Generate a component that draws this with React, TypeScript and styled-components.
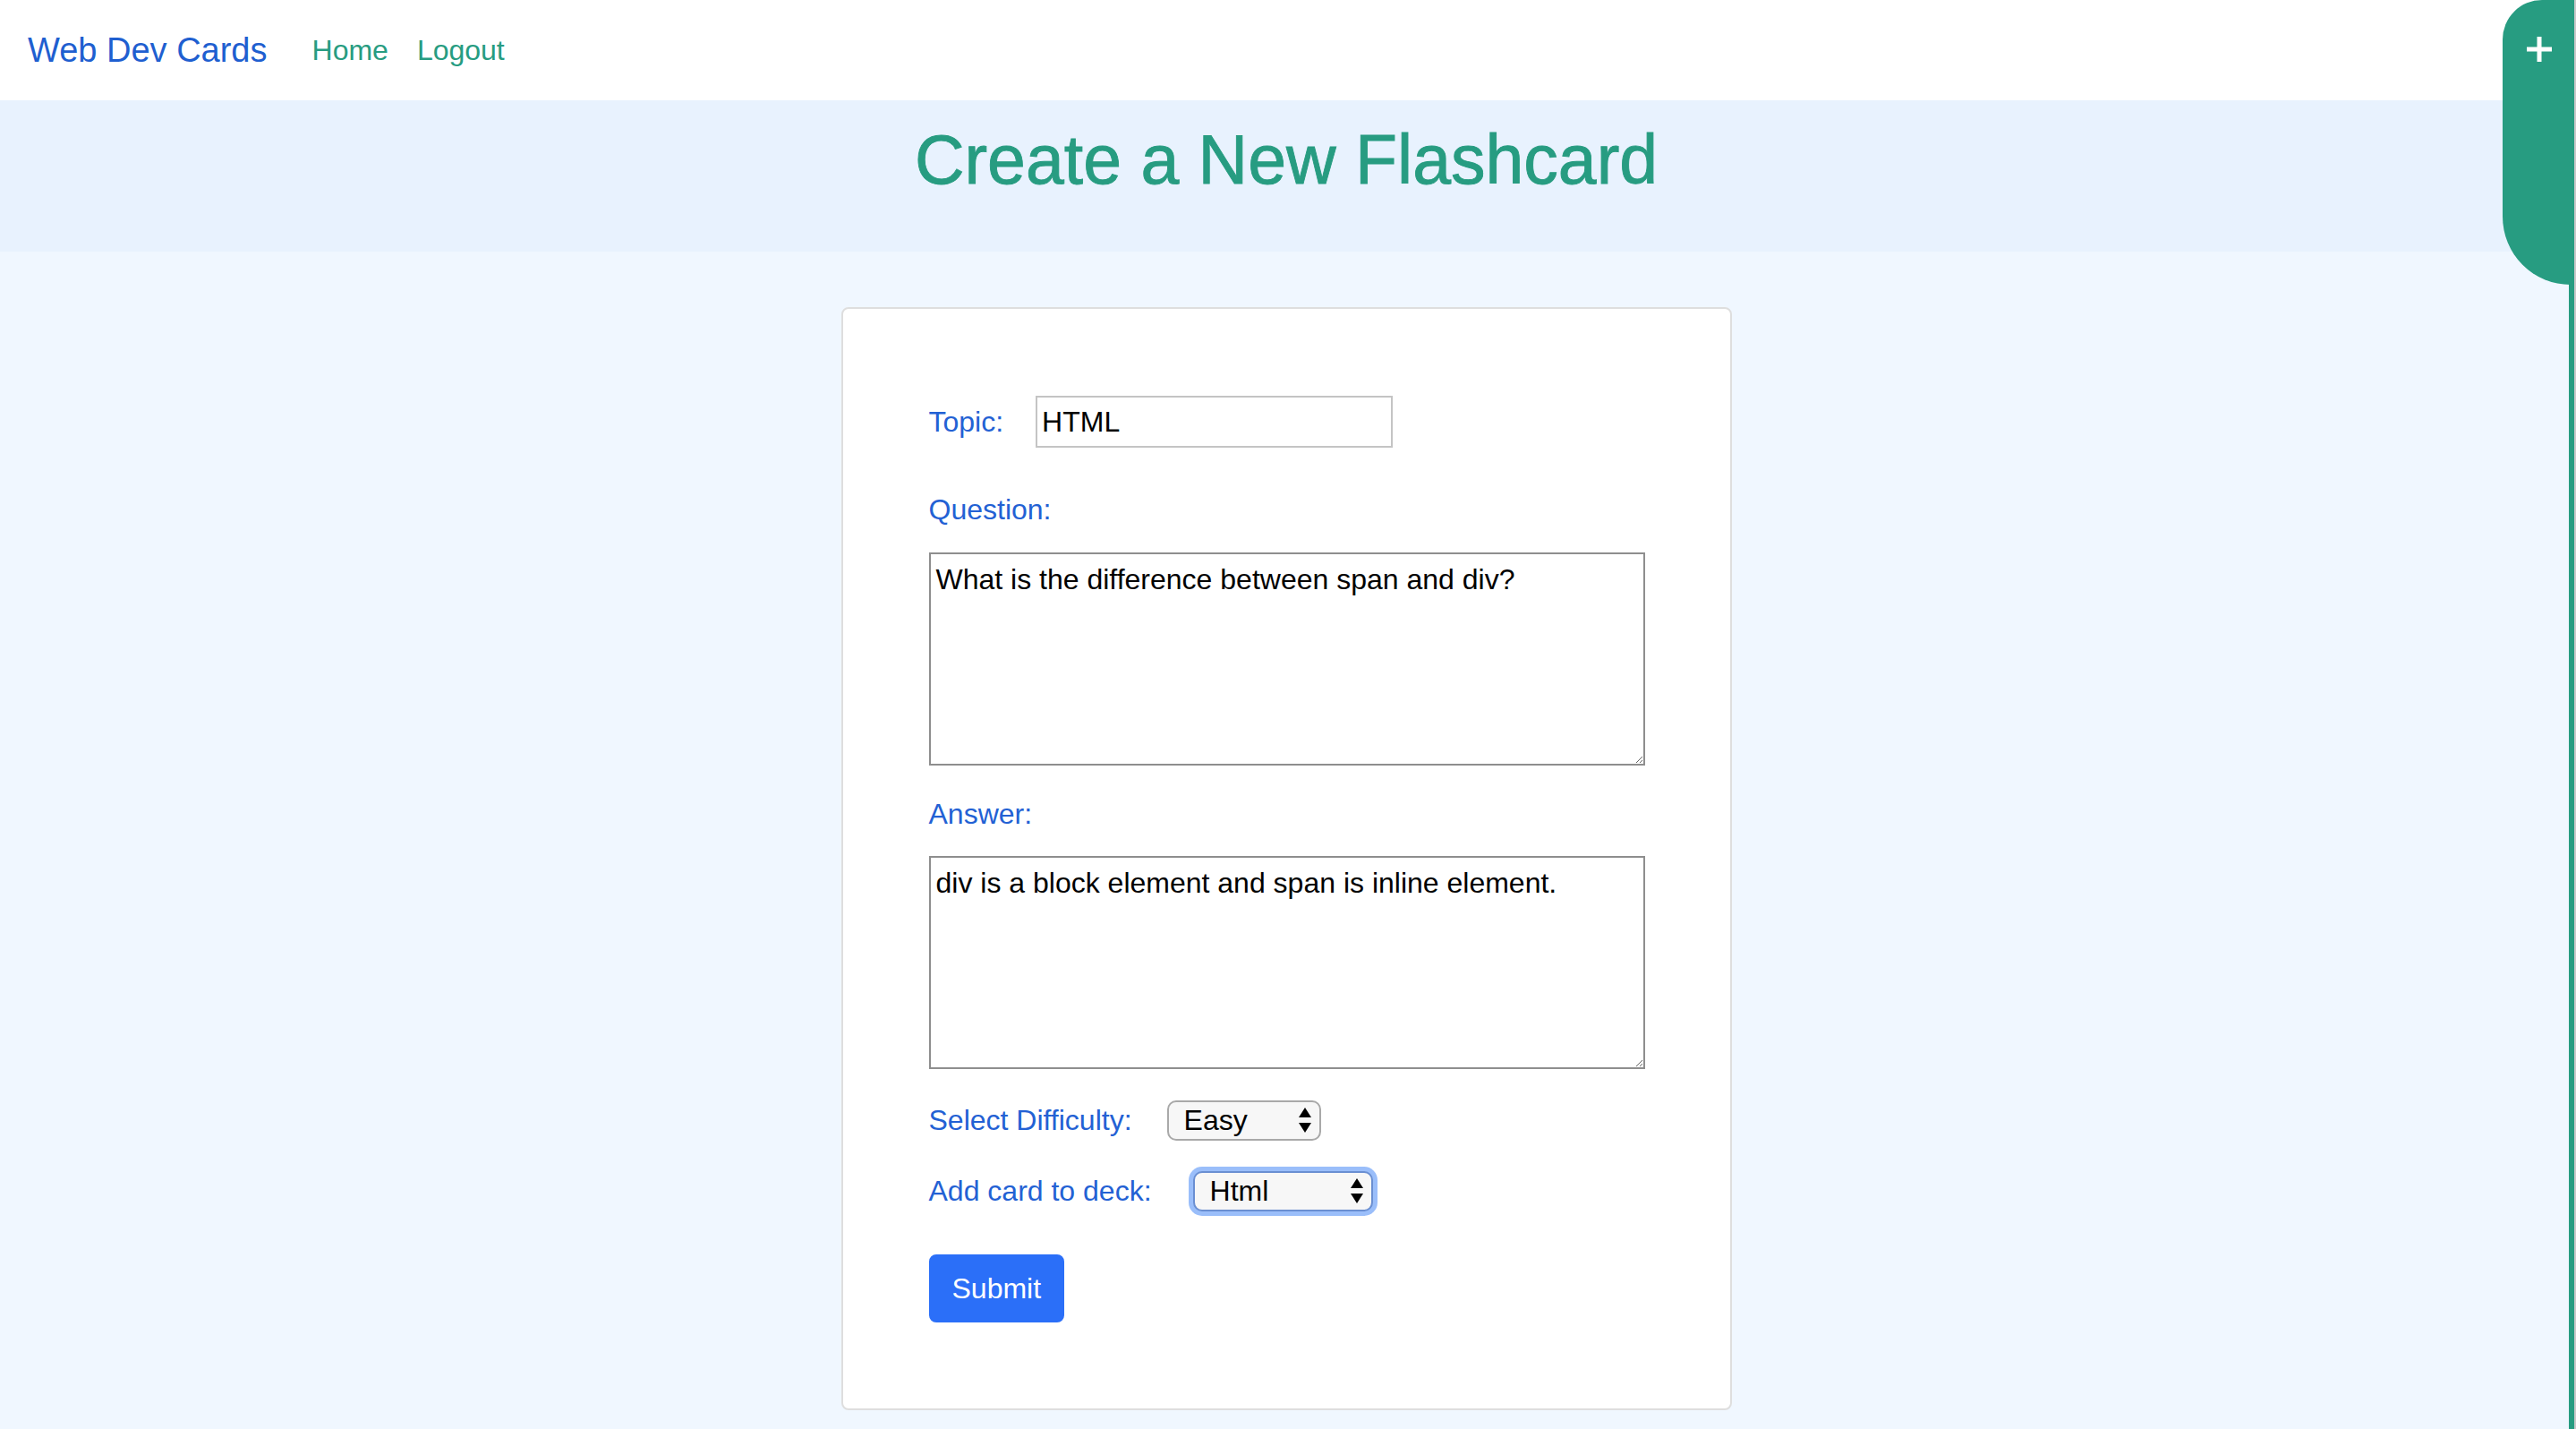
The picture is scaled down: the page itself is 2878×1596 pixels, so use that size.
import React from 'react';
import styled, { createGlobalStyle } from 'styled-components';

const GlobalStyle = createGlobalStyle`
  html, body {
    margin: 0;
    padding: 0;
    background: #f0f7ff;
    font-family: 'Liberation Sans', Arial, Helvetica, sans-serif;
    min-height: 100vh;
  }
  body {
    padding-right: 4px;
  }
  * {
    box-sizing: border-box;
  }
`;

const BLUE = '#2361d4';
const GREEN = '#279c81';

const Navbar = styled.nav`
  display: flex;
  align-items: center;
  height: 112px;
  margin-right: -4px;
  padding: 0 32px 0 31px;
  background: #ffffff;
`;

const Brand = styled.a`
  font-size: 38px;
  color: #1f5fd0;
  text-decoration: none;
  margin-right: 34px;
  line-height: 1.5;
`;

const NavLink = styled.a`
  font-size: 32px;
  color: ${GREEN};
  text-decoration: none;
  padding: 0 16px;
  line-height: 1.5;
`;

const Jumbo = styled.header`
  background: #e8f2fe;
  height: 169px;
  margin-right: -4px;
  padding: 18px 4px 0 0;
  text-align: center;
`;

const Title = styled.h1`
  margin: 0;
  font-size: 77px;
  font-weight: 400;
  line-height: 96px;
  color: ${GREEN};
  -webkit-text-stroke: 0.9px ${GREEN};
`;

const Card = styled.main`
  width: 995px;
  margin: 62px auto 24px;
  background: #ffffff;
  border: 2px solid #dedede;
  border-radius: 8px;
  padding: 97px 96px 96px;
`;

const Row = styled.div<{ $gap: number; $mb: number }>`
  display: flex;
  align-items: center;
  gap: ${({ $gap }) => $gap}px;
  margin-bottom: ${({ $mb }) => $mb}px;
`;

const Label = styled.label<{ $mb?: number }>`
  display: block;
  font-size: 32px;
  line-height: 48px;
  color: ${BLUE};
  margin-bottom: ${({ $mb = 0 }) => $mb}px;
`;

const TextInput = styled.input`
  width: 399px;
  height: 58px;
  border: 2px solid #c4c4c4;
  padding: 0 5px;
  font-family: inherit;
  font-size: 32px;
  color: #000;
  background: #fff;
  outline: none;
`;

const TextArea = styled.textarea<{ $mb: number }>`
  display: block;
  width: 800px;
  height: 238px;
  border: 2px solid #8e8e8e;
  padding: 4px 6px;
  font-family: inherit;
  font-size: 32px;
  line-height: 48px;
  color: #000;
  background: #fff;
  outline: none;
  margin: 0 0 ${({ $mb }) => $mb}px;
`;

const SelectWrap = styled.div`
  position: relative;
  display: inline-flex;
`;

const Select = styled.select<{ $w: number; $focused?: boolean }>`
  appearance: none;
  width: ${({ $w }) => $w}px;
  height: 45px;
  border: 2px solid ${({ $focused }) => ($focused ? '#6a8fd2' : '#a9a9a9')};
  border-radius: 10px;
  background: #f7f7f7;
  padding: 0 30px 0 17px;
  font-family: inherit;
  font-size: 32px;
  color: #000;
  outline: none;
  box-shadow: ${({ $focused }) =>
    $focused ? '0 0 0 5px rgba(120, 168, 248, 0.75)' : 'none'};
`;

const Arrows = styled.svg`
  position: absolute;
  right: 10px;
  top: 50%;
  transform: translateY(-50%);
  pointer-events: none;
`;

const SubmitButton = styled.button`
  display: inline-block;
  padding: 12px 24px;
  font-family: inherit;
  font-size: 32px;
  line-height: 48px;
  color: #ffffff;
  background: #2b6ff8;
  border: 2px solid #2b6ff8;
  border-radius: 8px;
  cursor: pointer;
`;

const SideStripe = styled.div`
  position: fixed;
  top: 0;
  right: 0;
  bottom: 0;
  width: 8px;
  background: ${GREEN};
  border-right: 2px solid #c9c9c9;
`;

const SideTab = styled.button`
  position: fixed;
  top: 0;
  right: 2px;
  width: 80px;
  height: 318px;
  border: none;
  background: ${GREEN};
  border-radius: 44px 0 0 76px;
  padding: 40px 0 0 26px;
  display: flex;
  align-items: flex-start;
  cursor: pointer;
`;

const SelectArrows = () => (
  <Arrows width="16" height="30" viewBox="0 0 16 30">
    <path d="M8 1 L15 12 L1 12 Z" fill="#000" />
    <path d="M1 18 L15 18 L8 29 Z" fill="#000" />
  </Arrows>
);

export default function App() {
  return (
    <>
      <GlobalStyle />
      <Navbar>
        <Brand href="#">Web Dev Cards</Brand>
        <NavLink href="#">Home</NavLink>
        <NavLink href="#">Logout</NavLink>
      </Navbar>

      <Jumbo>
        <Title>Create a New Flashcard</Title>
      </Jumbo>

      <Card>
        <form onSubmit={(e) => e.preventDefault()}>
          <Row $gap={36} $mb={45}>
            <Label htmlFor="topic">Topic:</Label>
            <TextInput id="topic" defaultValue="HTML" />
          </Row>

          <Label htmlFor="question" $mb={24}>
            Question:
          </Label>
          <TextArea
            id="question"
            $mb={30}
            defaultValue="What is the difference between span and div?"
          />

          <Label htmlFor="answer" $mb={23}>
            Answer:
          </Label>
          <TextArea
            id="answer"
            $mb={33}
            defaultValue="div is a block element and span is inline element."
          />

          <Row $gap={39} $mb={31}>
            <Label htmlFor="difficulty">Select Difficulty:</Label>
            <SelectWrap>
              <Select id="difficulty" $w={172} defaultValue="Easy">
                <option>Easy</option>
                <option>Medium</option>
                <option>Hard</option>
              </Select>
              <SelectArrows />
            </SelectWrap>
          </Row>

          <Row $gap={46} $mb={47}>
            <Label htmlFor="deck">Add card to deck:</Label>
            <SelectWrap>
              <Select id="deck" $w={201} $focused defaultValue="Html">
                <option>Html</option>
                <option>CSS</option>
                <option>JavaScript</option>
              </Select>
              <SelectArrows />
            </SelectWrap>
          </Row>

          <SubmitButton type="submit">Submit</SubmitButton>
        </form>
      </Card>

      <SideStripe />
      <SideTab aria-label="Add">
        <svg width="30" height="30" viewBox="0 0 30 30">
          <path d="M15 1 V29 M1 15 H29" stroke="#fff" strokeWidth="5" />
        </svg>
      </SideTab>
    </>
  );
}
